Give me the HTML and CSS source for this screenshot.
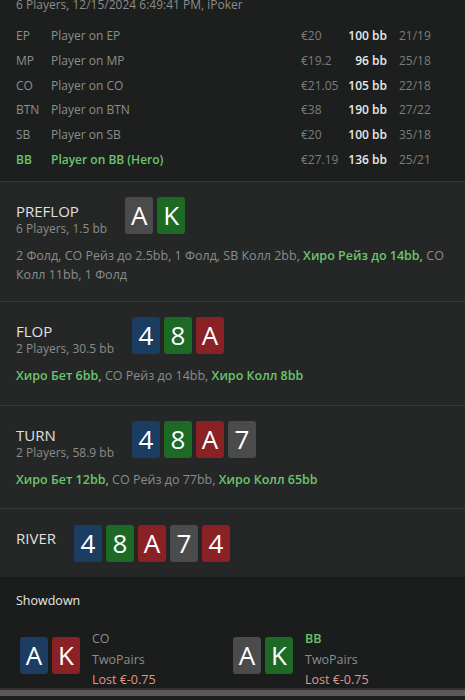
FILE: index.html
```html
<!DOCTYPE html>
<html>
<head>
<meta charset="utf-8">
<link rel="stylesheet" href="styles.css">
</head>
<body>
<div class="page">
  <section class="players">
    <div class="meta">6 Players, 12/15/2024 6:49:41 PM, iPoker</div>
    <div class="prow"><span class="pos">EP</span><span class="name">Player on EP</span><span class="eur">€20</span><span class="bb">100 bb</span><span class="ratio">21/19</span></div>
    <div class="prow"><span class="pos">MP</span><span class="name">Player on MP</span><span class="eur">€19.2</span><span class="bb">96 bb</span><span class="ratio">25/18</span></div>
    <div class="prow"><span class="pos">CO</span><span class="name">Player on CO</span><span class="eur">€21.05</span><span class="bb">105 bb</span><span class="ratio">22/18</span></div>
    <div class="prow"><span class="pos">BTN</span><span class="name">Player on BTN</span><span class="eur">€38</span><span class="bb">190 bb</span><span class="ratio">27/22</span></div>
    <div class="prow"><span class="pos">SB</span><span class="name">Player on SB</span><span class="eur">€20</span><span class="bb">100 bb</span><span class="ratio">35/18</span></div>
    <div class="prow hero"><span class="pos">BB</span><span class="name">Player on BB (Hero)</span><span class="eur">€27.19</span><span class="bb">136 bb</span><span class="ratio">25/21</span></div>
  </section>

  <section class="street s-pre">
    <div class="street-head">
      <div class="street-label">
        <div class="street-title">PREFLOP</div>
        <div class="street-sub">6 Players, 1.5 bb</div>
      </div>
      <div class="cards"><span class="card gray">A</span><span class="card green">K</span></div>
    </div>
    <div class="actions">2 Фолд, CO Рейз до 2.5bb, 1 Фолд, SB Колл 2bb, <b class="heroact">Хиро Рейз до 14bb,</b> CO Колл 11bb, 1 Фолд</div>
  </section>

  <section class="street s-flop">
    <div class="street-head">
      <div class="street-label">
        <div class="street-title">FLOP</div>
        <div class="street-sub">2 Players, 30.5 bb</div>
      </div>
      <div class="cards"><span class="card blue">4</span><span class="card green">8</span><span class="card red">A</span></div>
    </div>
    <div class="actions"><b class="heroact">Хиро Бет 6bb,</b> CO Рейз до 14bb, <b class="heroact">Хиро Колл 8bb</b></div>
  </section>

  <section class="street s-turn">
    <div class="street-head">
      <div class="street-label">
        <div class="street-title">TURN</div>
        <div class="street-sub">2 Players, 58.9 bb</div>
      </div>
      <div class="cards"><span class="card blue">4</span><span class="card green">8</span><span class="card red">A</span><span class="card gray">7</span></div>
    </div>
    <div class="actions"><b class="heroact">Хиро Бет 12bb,</b> CO Рейз до 77bb, <b class="heroact">Хиро Колл 65bb</b></div>
  </section>

  <section class="street river">
    <div class="street-head">
      <div class="street-label">
        <div class="street-title">RIVER</div>
      </div>
      <div class="cards"><span class="card blue">4</span><span class="card green">8</span><span class="card red">A</span><span class="card gray">7</span><span class="card red">4</span></div>
    </div>
  </section>

  <section class="showdown">
    <div class="sd-title">Showdown</div>
    <div class="sd-row">
      <div class="sd-player">
        <div class="cards"><span class="card blue">A</span><span class="card red">K</span></div>
        <div class="sd-info">
          <div class="sd-pos">CO</div>
          <div class="sd-hand">TwoPairs</div>
          <div class="sd-result">Lost €-0.75</div>
        </div>
      </div>
      <div class="sd-player">
        <div class="cards"><span class="card gray">A</span><span class="card green">K</span></div>
        <div class="sd-info">
          <div class="sd-pos hero">BB</div>
          <div class="sd-hand">TwoPairs</div>
          <div class="sd-result">Lost €-0.75</div>
        </div>
      </div>
    </div>
  </section>
  <div class="bottom-bar"></div>
</div>
</body>
</html>
```

FILE: styles.css
```css
* { box-sizing: border-box; }
html, body { margin: 0; padding: 0; }
body {
  background: #1c1f1e;
  font-family: "Open Sans", "Noto Sans", sans-serif;
  font-size: 12px;
  color: #8a8d8b;
  width: 465px;
  height: 700px;
  overflow: hidden;
}
.page { display: flex; flex-direction: column; }

.players {
  background: #1c1f1e;
  padding: 0 16px 0 16px;
  height: 187px;
  border-bottom: 1px solid #333735;
  margin-top: -5px;
}
.meta { height: 20px; line-height: 20px; margin-bottom: 9px; white-space: nowrap; }
.prow {
  display: grid;
  grid-template-columns: 35px 250px 40px 46px 66px;
  height: 24.8px;
  line-height: 24.8px;
  align-items: center;
  white-space: nowrap;
}
.pos, .name { color: #8c8f8d; }
.eur { color: #7b7e7c; }
.bb { color: #e8e8e8; font-weight: 600; text-align: right; }
.ratio { color: #7b7e7c; padding-left: 12px; }
.prow.hero .pos, .prow.hero .name { color: #6cc46c; font-weight: 600; }

.street {
  background: #242726;
  border-bottom: 1px solid #353937;
  padding: 15px 16px 0 16px;
}
.s-pre { height: 120px; }
.s-flop { height: 104px; }
.s-turn { height: 103px; }
.street-head { display: flex; gap: 18px; align-items: flex-start; }
.street-label { padding-top: 5px; }
.street-title { color: #e0e0e0; font-size: 15px; line-height: 18px; }
.street-sub { color: #8a8d8b; font-size: 12px; line-height: 18px; white-space: nowrap; }
.actions { color: #8a8d8b; font-size: 12.5px; line-height: 18.5px; margin-top: 9px; }
.heroact { color: #6cc46c; font-weight: 600; }
.street.river { height: 68px; padding-top: 16px; border-bottom: none; }
.street.river .street-label { padding-top: 4px; }

.cards { display: flex; gap: 4px; }
.card {
  width: 28px;
  height: 37px;
  border-radius: 3px;
  color: #fff;
  font-size: 26px;
  line-height: 37px;
  text-align: center;
  display: block;
}
.card.gray { background: #4b4b4b; }
.card.green { background: #1c6a24; }
.card.blue { background: #1b3d62; }
.card.red { background: #8a2225; }

.showdown {
  background: #1b1d1c;
  padding: 15px 16px 0 20px;
  height: 111px;
}
.sd-title { color: #e8e8e8; font-size: 12.5px; margin-left: -4px; line-height: 18px; }
.sd-row { display: flex; margin-top: 19px; }
.sd-player { display: flex; gap: 12px; width: 213px; align-items: flex-start; }
.sd-player .cards { margin-top: 8px; }
.sd-info { line-height: 20.5px; font-size: 12.5px; }
.sd-pos { color: #8a8d8b; }
.sd-pos.hero { color: #6cc46c; font-weight: 600; }
.sd-hand { color: #8a8d8b; }
.sd-result { color: #e0968a; }

.bottom-bar {
  height: 8px;
  background: #352f2e;
  border-bottom: 6px solid #5a5a5a;
}
```
